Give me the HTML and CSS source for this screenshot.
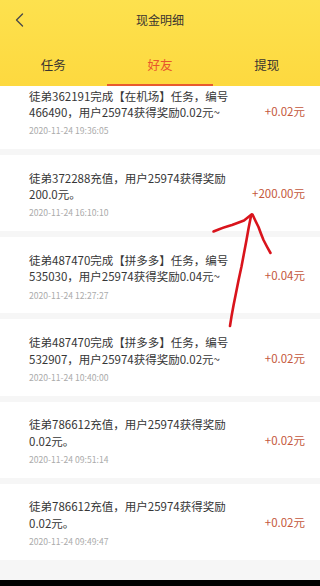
FILE: index.html
```html
<!DOCTYPE html>
<html lang="zh-CN">
<head>
<meta charset="utf-8">
<title>现金明细</title>
<link rel="stylesheet" href="styles.css">
</head>
<body>
<div class="screen">
  <header class="top">
    <div class="titlebar">
      <span class="back">
        <svg width="12" height="16" viewBox="0 0 12 16"><path d="M8.5 2 L2.5 8 L8.5 14" fill="none" stroke="#4a4a4a" stroke-width="1.4" stroke-linecap="round" stroke-linejoin="round"/></svg>
      </span>
      <h1 class="title">现金明细</h1>
    </div>
    <nav class="tabs">
      <a class="tab">任务</a>
      <a class="tab active">好友</a>
      <a class="tab">提现</a>
    </nav>
  </header>
  <main class="list">
    <div class="scroll">
      <div class="card">
        <div class="info">
          <p class="desc">徒弟362191完成【在机场】任务，编号466490，用户25974获得奖励0.02元~</p>
          <p class="date">2020-11-24 19:36:05</p>
        </div>
        <span class="amount">+0.02元</span>
      </div>
      <div class="card">
        <div class="info">
          <p class="desc">徒弟372288充值，用户25974获得奖励200.0元。</p>
          <p class="date">2020-11-24 16:10:10</p>
        </div>
        <span class="amount">+200.00元</span>
      </div>
      <div class="card">
        <div class="info">
          <p class="desc">徒弟487470完成【拼多多】任务，编号535030，用户25974获得奖励0.04元~</p>
          <p class="date">2020-11-24 12:27:27</p>
        </div>
        <span class="amount">+0.04元</span>
      </div>
      <div class="card">
        <div class="info">
          <p class="desc">徒弟487470完成【拼多多】任务，编号532907，用户25974获得奖励0.02元~</p>
          <p class="date">2020-11-24 10:40:00</p>
        </div>
        <span class="amount">+0.02元</span>
      </div>
      <div class="card">
        <div class="info">
          <p class="desc">徒弟786612充值，用户25974获得奖励0.02元。</p>
          <p class="date">2020-11-24 09:51:14</p>
        </div>
        <span class="amount">+0.02元</span>
      </div>
      <div class="card">
        <div class="info">
          <p class="desc">徒弟786612充值，用户25974获得奖励0.02元。</p>
          <p class="date">2020-11-24 09:49:47</p>
        </div>
        <span class="amount">+0.02元</span>
      </div>
    </div>
  </main>
  <div class="navbar"></div>
  <svg class="annotation" width="320" height="586" viewBox="0 0 320 586">
    <g fill="none" stroke="#d9141c" stroke-width="2.6" stroke-linecap="round" stroke-linejoin="round">
      <path d="M213.5 231.5 Q224 227 232 225 Q240 222 244 220.5 L251.5 214.5"/>
      <path d="M252.5 214.5 Q255 220 258.5 227 Q261 234 263.5 240 Q267 247 270.5 253"/>
      <path d="M251 216 Q248.5 228 246.5 240 Q244 253 241.5 266.5 Q238.5 280 236 293 Q233.5 305 231.5 316.5 L230 326"/>
    </g>
  </svg>
</div>
</body>
</html>
```

FILE: styles.css
```css
* {
  box-sizing: border-box;
}

html, body {
  margin: 0;
  padding: 0;
}

body {
  font-family: "Noto Sans CJK SC", "Noto Sans", sans-serif;
  color: #333;
  background: #f6f6f6;
}

.screen {
  position: relative;
  width: 320px;
  height: 586px;
  display: flex;
  flex-direction: column;
  overflow: hidden;
  background: #f6f6f6;
}

.top {
  flex: 0 0 86px;
  display: flex;
  flex-direction: column;
  background: linear-gradient(180deg, #fde14e 0%, #fdd93f 100%);
}

.titlebar {
  height: 40px;
  display: flex;
  align-items: center;
  justify-content: center;
  position: relative;
}

.back {
  position: absolute;
  left: 14px;
  top: 12px;
  display: flex;
}

.title {
  margin: 0;
  font-size: 12px;
  font-weight: 400;
  color: #3a3530;
  line-height: 16px;
}

.tabs {
  height: 46px;
  display: flex;
}

.tab {
  flex: 1;
  display: flex;
  align-items: center;
  justify-content: center;
  padding-top: 4px;
  border-bottom: 2px solid transparent;
  font-size: 12.5px;
  color: #3a3530;
}

.tab.active {
  color: #e8562c;
  border-bottom-color: #e85a2e;
}

.list {
  flex: 1;
  overflow: hidden;
}

.scroll {
  margin-top: -12.8px;
  display: flex;
  flex-direction: column;
  gap: 6px;
}

.card {
  height: 76.1px;
  background: #fff;
  display: flex;
  align-items: center;
  padding: 0 15px 0 29px;
}

.info {
  width: 212px;
  display: flex;
  flex-direction: column;
  padding-top: 1.6px;
}

.desc {
  margin: 0;
  font-size: 11.5px;
  line-height: 16.6px;
  color: #363636;
}

.date {
  margin: 4.5px 0 0;
  font-size: 8.6px;
  line-height: 11px;
  color: #ababab;
}

.amount {
  margin-left: auto;
  font-size: 11.5px;
  color: #c4573b;
  white-space: nowrap;
}

.navbar {
  flex: 0 0 6px;
  background: #000;
}

.annotation {
  position: absolute;
  left: 0;
  top: 0;
  pointer-events: none;
}
```
